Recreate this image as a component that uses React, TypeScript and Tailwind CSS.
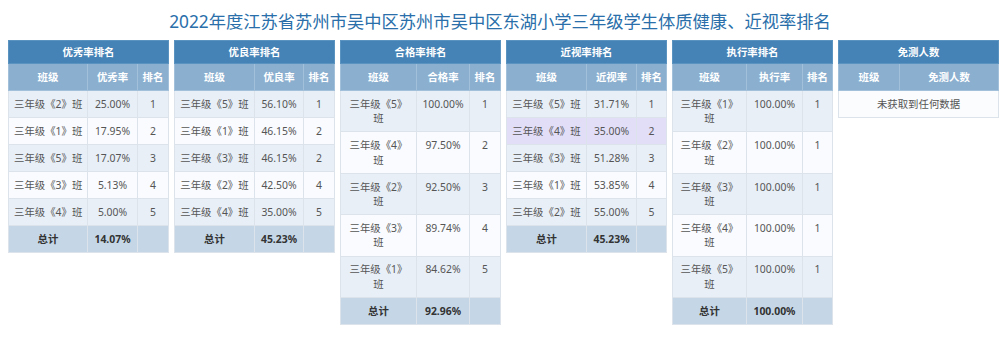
import React from "react";

interface Row {
  name: string;
  value: string;
  rank: string;
  highlight?: boolean;
}

interface IRankProps {
  title: string;
  label: string;
  cols: [string, string];
  rows: Row[];
  total: string;
  wrap?: boolean;
}

const cellCls = "border border-[#dce3ea] px-[5px] py-[5.8px] leading-[14.4px] text-center align-top";

function RankTable({ title, label, cols, rows, total, wrap }: IRankProps): React.JSX.Element {
  return (
    <div className="w-[161px] shrink-0">
      <table className="w-full table-fixed border-collapse border border-[#dce3ea]">
        <colgroup>
          <col className={cols[0]} />
          <col className={cols[1]} />
          <col />
        </colgroup>
        <thead>
          <tr className="bg-[#4582b5] text-white font-bold">
            <th colSpan={3} className="border border-[#5b93c0] h-[23px] leading-[14px] text-center">{title}</th>
          </tr>
          <tr className="bg-[#8bafcf] text-white font-bold">
            <th className="border border-[#a3c0da] h-[27px] leading-[14px] text-center">班级</th>
            <th className="border border-[#a3c0da] h-[27px] leading-[14px] text-center">{label}</th>
            <th className="border border-[#a3c0da] h-[27px] leading-[14px] text-center">排名</th>
          </tr>
        </thead>
        <tbody className="text-[#555]">
          {rows.map((r, i) => (
            <tr
              key={r.name}
              className={r.highlight ? "bg-[#e2def8]" : i % 2 === 0 ? "bg-[#e8eff7]" : "bg-[#f9fbfe]"}
            >
              <td className={`${cellCls} ${wrap ? "" : "whitespace-nowrap"}`}>{r.name}</td>
              <td className={cellCls}>{r.value}</td>
              <td className={cellCls}>{r.rank}</td>
            </tr>
          ))}
          <tr className="bg-[#c5d7e7] text-[#333] font-bold">
            <td className={cellCls}>总计</td>
            <td className={cellCls}>{total}</td>
            <td className={cellCls}></td>
          </tr>
        </tbody>
      </table>
    </div>
  );
}

const cls = (n: number) => `三年级《${n}》班`;

export default function App(): React.JSX.Element {
  return (
    <div className="w-[1000px] h-[361px] bg-white pt-[10px] font-['Noto_Sans','Noto_Sans_CJK_SC',sans-serif] text-[10.4px]">
      <h1 className="h-[24px] leading-[24px] text-center text-[17.3px] text-[#2a6faa] mb-[6px]">
        2022年度江苏省苏州市吴中区苏州市吴中区东湖小学三年级学生体质健康、近视率排名
      </h1>
      <div className="flex gap-[5px] pl-[8px] items-start">
        <RankTable
          title="优秀率排名"
          label="优秀率"
          cols={["w-[79px]", "w-[50px]"]}
          total="14.07%"
          rows={[
            { name: cls(2), value: "25.00%", rank: "1" },
            { name: cls(1), value: "17.95%", rank: "2" },
            { name: cls(5), value: "17.07%", rank: "3" },
            { name: cls(3), value: "5.13%", rank: "4" },
            { name: cls(4), value: "5.00%", rank: "5" },
          ]}
        />
        <RankTable
          title="优良率排名"
          label="优良率"
          cols={["w-[80px]", "w-[49px]"]}
          total="45.23%"
          rows={[
            { name: cls(5), value: "56.10%", rank: "1" },
            { name: cls(1), value: "46.15%", rank: "2" },
            { name: cls(3), value: "46.15%", rank: "2" },
            { name: cls(2), value: "42.50%", rank: "4" },
            { name: cls(4), value: "35.00%", rank: "5" },
          ]}
        />
        <RankTable
          title="合格率排名"
          label="合格率"
          wrap
          cols={["w-[76px]", "w-[53px]"]}
          total="92.96%"
          rows={[
            { name: cls(5), value: "100.00%", rank: "1" },
            { name: cls(4), value: "97.50%", rank: "2" },
            { name: cls(2), value: "92.50%", rank: "3" },
            { name: cls(3), value: "89.74%", rank: "4" },
            { name: cls(1), value: "84.62%", rank: "5" },
          ]}
        />
        <RankTable
          title="近视率排名"
          label="近视率"
          cols={["w-[80px]", "w-[50px]"]}
          total="45.23%"
          rows={[
            { name: cls(5), value: "31.71%", rank: "1" },
            { name: cls(4), value: "35.00%", rank: "2", highlight: true },
            { name: cls(3), value: "51.28%", rank: "3" },
            { name: cls(1), value: "53.85%", rank: "4" },
            { name: cls(2), value: "55.00%", rank: "5" },
          ]}
        />
        <RankTable
          title="执行率排名"
          label="执行率"
          wrap
          cols={["w-[74px]", "w-[56px]"]}
          total="100.00%"
          rows={[1, 2, 3, 4, 5].map((n) => ({ name: cls(n), value: "100.00%", rank: "1" }))}
        />
        <div className="w-[161px] shrink-0">
          <table className="w-full table-fixed border-collapse border border-[#dce3ea]">
            <colgroup>
              <col className="w-[61px]" />
              <col />
            </colgroup>
            <thead>
              <tr className="bg-[#4582b5] text-white font-bold">
                <th colSpan={2} className="border border-[#5b93c0] h-[23px] leading-[14px] text-center">免测人数</th>
              </tr>
              <tr className="bg-[#8bafcf] text-white font-bold">
                <th className="border border-[#a3c0da] h-[27px] leading-[14px] text-center">班级</th>
                <th className="border border-[#a3c0da] h-[27px] leading-[14px] text-center">免测人数</th>
              </tr>
            </thead>
            <tbody className="text-[#555]">
              <tr className="bg-[#fafcfe]">
                <td colSpan={2} className={cellCls}>未获取到任何数据</td>
              </tr>
            </tbody>
          </table>
        </div>
      </div>
    </div>
  );
}
